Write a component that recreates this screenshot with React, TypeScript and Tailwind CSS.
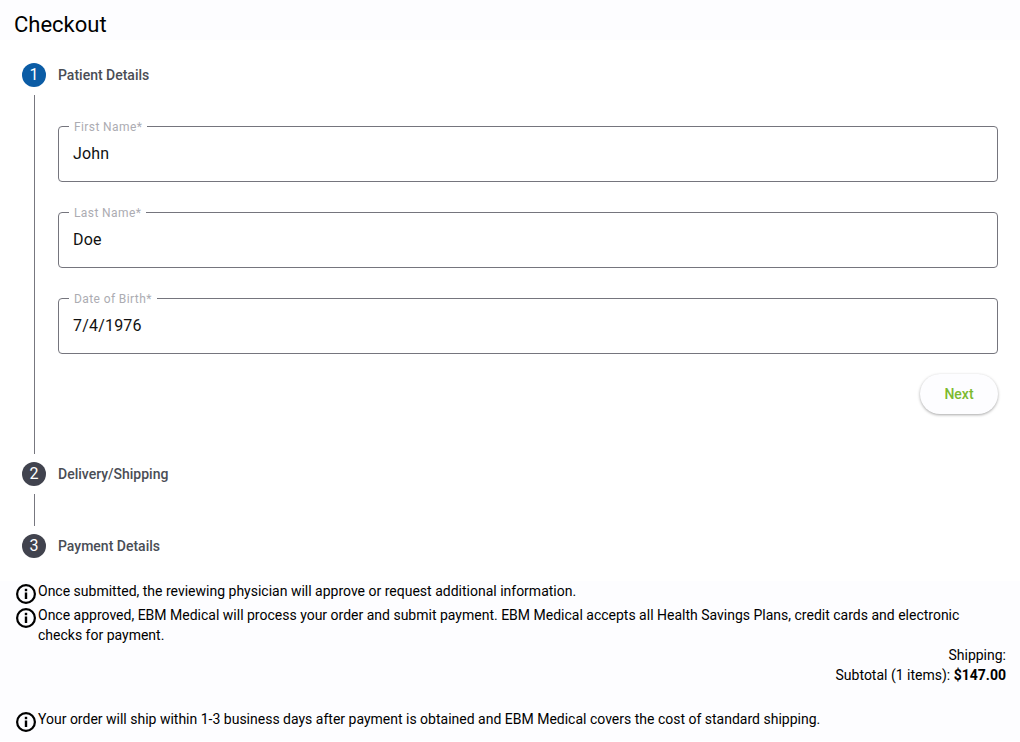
import { ReactNode } from 'react';

const fields = [
  { label: 'First Name*', value: 'John' },
  { label: 'Last Name*', value: 'Doe' },
  { label: 'Date of Birth*', value: '7/4/1976' },
];

function InfoIcon() {
  return (
    <svg width="20" height="20" viewBox="0 0 20 20" className="shrink-0 mt-[3px] mr-[2px]" fill="none">
      <circle cx="10" cy="10" r="8.9" stroke="#000" strokeWidth="2.2" />
      <rect x="8.8" y="8.5" width="2.4" height="6.5" fill="#000" />
      <rect x="8.8" y="4.8" width="2.4" height="2.4" fill="#000" />
    </svg>
  );
}

function StepHead({ n, label, active }: { n: number; label: string; active?: boolean }) {
  return (
    <div className="flex items-center h-6 ml-[22px]">
      <div
        className={`w-6 h-6 rounded-full flex items-center justify-center text-white text-[16px] ${
          active ? 'bg-[#0b5ca5]' : 'bg-[#41434e]'
        }`}
      >
        {n}
      </div>
      <span className="ml-3 text-[14px] font-medium text-[#4a4d55]">{label}</span>
    </div>
  );
}

function Note({ children }: { children: ReactNode }) {
  return (
    <div className="flex items-start min-h-6">
      <InfoIcon />
      <p className="text-[14px] leading-[20px] text-black pr-[6px]">{children}</p>
    </div>
  );
}

export default function App() {
  return (
    <div className="w-[1020px] h-[742px] overflow-hidden bg-white font-['Roboto',sans-serif]">
      <header className="h-10 bg-[#fdfdff] pl-[14px] pt-[10px]">
        <h1 className="text-[22px] leading-[30px] text-black">Checkout</h1>
      </header>

      <section className="pt-[23px] h-[542px]">
        <StepHead n={1} label="Patient Details" active />
        <div className="ml-[34px] mt-2 h-[359px] border-l border-[#77777f] pl-[23px] pr-[22px] pt-[23px]">
          <div className="flex flex-col gap-[22px]">
            {fields.map((f) => (
              <fieldset key={f.label} className="h-[64px] border border-[#75757d] rounded-[4px] px-[10px] block">
                <legend className="px-[5px] text-[12px] leading-[16px] tracking-[0.4px] text-[#acacb2]">
                  <span className="relative top-[1px]">{f.label}</span>
                </legend>
                <div className="pl-[4px] pt-[8px] text-[16px] leading-[24px] text-[#111] tracking-[0.2px]">{f.value}</div>
              </fieldset>
            ))}
          </div>
          <div className="flex justify-end mt-[20px]">
            <button className="w-[78px] h-10 rounded-full bg-[#fdfdff] text-[14px] font-medium text-[#7cba2f] shadow-[0_1px_3px_rgba(0,0,0,0.35)]">
              Next
            </button>
          </div>
        </div>
        <div className="mt-2">
          <StepHead n={2} label="Delivery/Shipping" />
        </div>
        <div className="ml-[34px] my-2 h-8 border-l border-[#77777f]" />
        <StepHead n={3} label="Payment Details" />
      </section>

      <footer className="h-[160px] bg-[#fdfdff] pl-4 pr-[14px]">
        <div className="-mt-[1px]">
          <Note>Once submitted, the reviewing physician will approve or request additional information.</Note>
          <Note>
            Once approved, EBM Medical will process your order and submit payment. EBM Medical accepts all Health Savings
            Plans, credit cards and electronic checks for payment.
          </Note>
        </div>
        <div className="text-right text-[14px] leading-[20px] text-black">
          <div>Shipping:</div>
          <div>
            Subtotal (1 items): <span className="font-bold">$147.00</span>
          </div>
        </div>
        <div className="mt-[24px]">
          <Note>Your order will ship within 1-3 business days after payment is obtained and EBM Medical covers the cost of standard shipping.</Note>
        </div>
      </footer>
    </div>
  );
}
